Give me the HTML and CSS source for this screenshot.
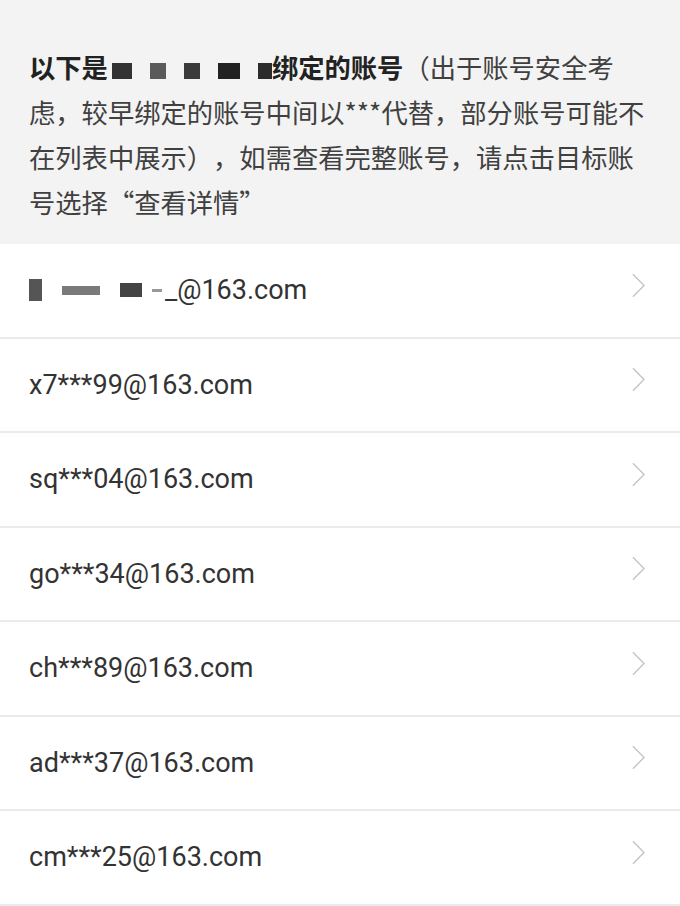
FILE: index.html
```html
<!DOCTYPE html>
<html lang="zh-CN">
<head>
    <meta charset="UTF-8">
    <meta name="viewport" content="width=device-width, initial-scale=1.0">
    <title>绑定的账号</title>
    <link rel="stylesheet" href="styles.css">
</head>
<body>
    <div class="notice">
        <b>以下是<span class="mosaic"><i class="m1"></i><i class="m2"></i><i class="m3"></i><i class="m4"></i><i class="m5"></i></span>绑定的账号</b>（出于账号安全考虑，较早绑定的账号中间以***代替，部分账号可能不在列表中展示），如需查看完整账号，请点击目标账号选择“查看详情”
    </div>

    <ul class="accounts">
        <li class="row">
            <span class="email"><span class="mosaic small"><i class="m1"></i><i class="m2"></i><i class="m3"></i><i class="m4"></i></span>_@163.com</span>
            <svg class="chevron" viewBox="0 0 14 26"><path d="M1 1 L13 13 L1 25" /></svg>
        </li>
        <li class="row">
            <span class="email">x7***99@163.com</span>
            <svg class="chevron" viewBox="0 0 14 26"><path d="M1 1 L13 13 L1 25" /></svg>
        </li>
        <li class="row">
            <span class="email">sq***04@163.com</span>
            <svg class="chevron" viewBox="0 0 14 26"><path d="M1 1 L13 13 L1 25" /></svg>
        </li>
        <li class="row">
            <span class="email">go***34@163.com</span>
            <svg class="chevron" viewBox="0 0 14 26"><path d="M1 1 L13 13 L1 25" /></svg>
        </li>
        <li class="row">
            <span class="email">ch***89@163.com</span>
            <svg class="chevron" viewBox="0 0 14 26"><path d="M1 1 L13 13 L1 25" /></svg>
        </li>
        <li class="row">
            <span class="email">ad***37@163.com</span>
            <svg class="chevron" viewBox="0 0 14 26"><path d="M1 1 L13 13 L1 25" /></svg>
        </li>
        <li class="row">
            <span class="email">cm***25@163.com</span>
            <svg class="chevron" viewBox="0 0 14 26"><path d="M1 1 L13 13 L1 25" /></svg>
        </li>
    </ul>
</body>
</html>
```

FILE: styles.css
```css
body {
    margin: 0;
    background-color: #fff;
    font-family: "Noto Sans CJK SC", "Noto Sans", sans-serif;
}

.notice {
    background-color: #f3f3f3; /* серый фон шапки */
    padding: 44px 29px 20px;
    font-size: 26.3px;
    line-height: 45px;
    color: #404040;
    text-spacing-trim: space-all; /* полноширинные скобки и запятые */
}

.notice b {
    color: #222;
    font-weight: bold;
}

.mosaic {
    display: inline-block;
    line-height: 0;
    vertical-align: middle;
    white-space: nowrap;
}

.mosaic i {
    display: inline-block;
    width: 16px;
    height: 16px;
    margin-right: 18px;
    background-color: #333;
    vertical-align: middle;
}

.mosaic .m1 { width: 20px; margin-left: 4px; }
.mosaic .m2 { background-color: #5a5a5a; }
.mosaic .m3 { background-color: #3a3a3a; }
.mosaic .m4 { background-color: #222; width: 22px; }
.mosaic .m5 { background-color: #2c2c2c; width: 14px; margin-right: 0; }

.mosaic.small {
    width: 136px;
}

.mosaic.small i {
    height: 22px;
    width: 13px;
    margin: 0 20px 0 0;
    background-color: #555;
}

.mosaic.small .m2 { width: 38px; height: 9px; background-color: #7a7a7a; }
.mosaic.small .m3 { width: 22px; height: 14px; background-color: #444; margin-right: 10px; }
.mosaic.small .m4 { width: 10px; height: 3px; background-color: #999; margin-right: 0; }

.accounts {
    list-style: none;
    margin: 0;
    padding: 0;
}

.row {
    display: flex;
    align-items: center;
    justify-content: space-between;
    height: 92.5px;
    padding: 0 35px 0 29px;
    border-bottom: 2px solid #ebebeb;
}

.email {
    font-family: Roboto, "Liberation Sans", sans-serif;
    font-size: 27px;
    color: #333;
    display: flex;
    align-items: center;
}

.chevron {
    width: 13px;
    height: 25px;
    margin-top: -10px;
    fill: none;
    stroke: #c4c4c4;
    stroke-width: 1.5;
}
```
